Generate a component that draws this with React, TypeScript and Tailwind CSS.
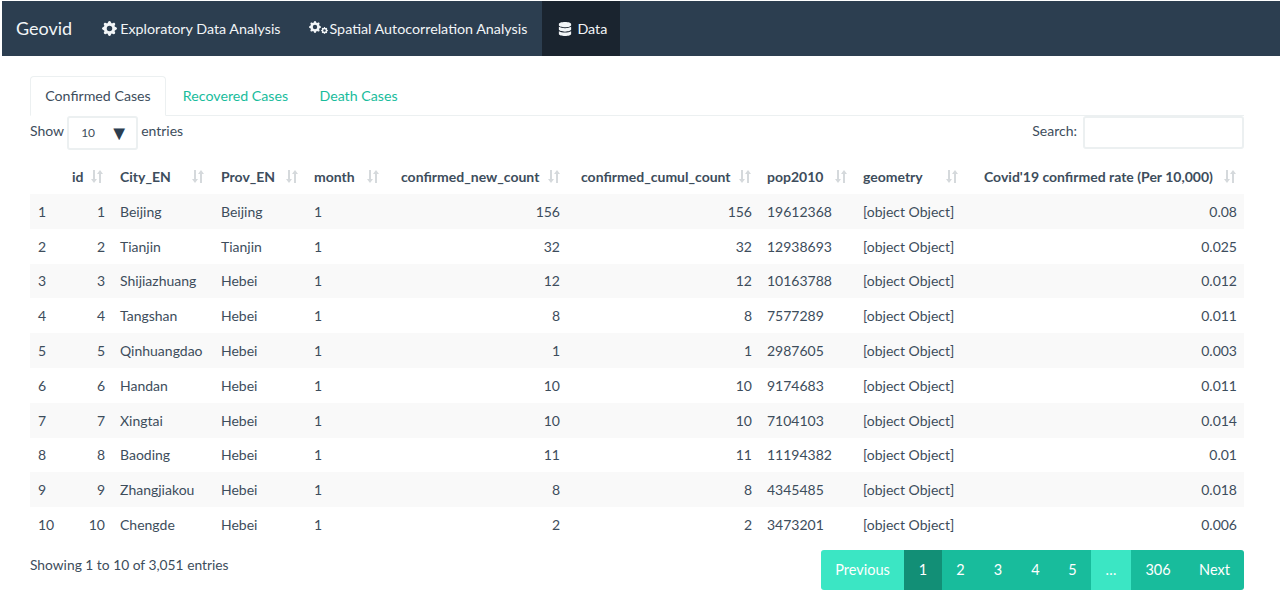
import { BsGearFill } from "react-icons/bs"
import { FaDatabase } from "react-icons/fa"

const rows = [
  [1, 1, "Beijing", "Beijing", 1, 156, 156, 19612368, "0.08"],
  [2, 2, "Tianjin", "Tianjin", 1, 32, 32, 12938693, "0.025"],
  [3, 3, "Shijiazhuang", "Hebei", 1, 12, 12, 10163788, "0.012"],
  [4, 4, "Tangshan", "Hebei", 1, 8, 8, 7577289, "0.011"],
  [5, 5, "Qinhuangdao", "Hebei", 1, 1, 1, 2987605, "0.003"],
  [6, 6, "Handan", "Hebei", 1, 10, 10, 9174683, "0.011"],
  [7, 7, "Xingtai", "Hebei", 1, 10, 10, 7104103, "0.014"],
  [8, 8, "Baoding", "Hebei", 1, 11, 11, 11194382, "0.01"],
  [9, 9, "Zhangjiakou", "Hebei", 1, 8, 8, 4345485, "0.018"],
  [10, 10, "Chengde", "Hebei", 1, 2, 2, 3473201, "0.006"],
]

const columns = [
  { label: "id", width: "w-[48px]", pad: "pr-[6px]" },
  { label: "City_EN", width: "w-[101px]", pad: "pr-[6px]" },
  { label: "Prov_EN", width: "w-[93px]", pad: "pr-[5px]" },
  { label: "month", width: "w-[87px]", pad: "pr-[11px]" },
  { label: "confirmed_new_count", width: "w-[180px]", pad: "pr-[10px]" },
  { label: "confirmed_cumul_count", width: "w-[186px]", pad: "pr-[5px]" },
  { label: "pop2010", width: "w-[96px]", pad: "pr-[5px]" },
  { label: "geometry", width: "w-[121px]", pad: "pr-[15px]" },
  { label: "Covid'19 confirmed rate (Per 10,000)", width: "w-[270px]", pad: "pr-[7px]" },
]

function SortIcon() {
  return (
    <svg width="14" height="15" viewBox="0 0 14 15" className="shrink-0 text-[#d5d9dc]" fill="currentColor">
      <path d="M3 1h2v9h2l-3 4-3-4h2z" />
      <path d="M10 14V5H8l3-4 3 4h-2v9z" transform="translate(-1 0)" />
    </svg>
  )
}

function PageLink({ label, className }: { label: string; className: string }) {
  return <div className={`flex h-full items-center justify-center text-white ${className}`}>{label}</div>
}

export default function App() {
  return (
    <div className="h-[612px] w-[1280px] overflow-hidden bg-white font-['Lato','Liberation_Sans',sans-serif] text-[14px] text-[#3d4d5c]">
      {/* Navbar */}
      <nav className="ml-[2px] mt-px flex h-[55px] items-stretch bg-[#2c3e50] text-[14.3px] text-[#f2f5f7]">
        <div className="flex items-center pl-[14px] pr-[30px] text-[18px]">Geovid</div>
        <div className="flex items-center gap-[3px] pr-[28px]">
          <BsGearFill className="text-[15px]" />
          Exploratory Data Analysis
        </div>
        <div className="flex items-center pr-[15px]">
          <BsGearFill className="mb-[3px] text-[12px]" />
          <BsGearFill className="mb-[-3px] mr-[2px] text-[7px]" />
          Spatial Autocorrelation Analysis
        </div>
        <div className="flex w-[78px] items-center gap-[5px] bg-[#1a242f] pl-[16px]">
          <FaDatabase className="text-[14px]" />
          Data
        </div>
      </nav>

      <div className="pl-[30px] pr-[36px] pt-[20px]">
        {/* Tabs */}
        <div className="flex h-[40px] gap-[2px] border-b border-[#ecf0f1] text-[14.2px]">
          <div className="flex h-[40px] w-[136px] items-center justify-center rounded-t border border-[#ecf0f1] border-b-white bg-white">
            Confirmed Cases
          </div>
          <div className="flex w-[135px] items-center justify-center text-[#18bc9c]">Recovered Cases</div>
          <div className="flex w-[107px] items-center justify-center text-[#18bc9c]">Death Cases</div>
        </div>

        {/* Length and search */}
        <div className="flex h-[33px] items-start justify-between">
          <div className="flex items-center gap-[3px]">
            <span className="mt-[-5px]">Show</span>
            <div className="flex h-[34px] w-[71px] items-center justify-between rounded-[3px] border-2 border-[#ecf0f1] pl-[12px] pr-[7px] text-[12px]">
              10
              <span className="mt-[-2px] text-[20px] leading-none text-[#2c3e50]">▼</span>
            </div>
            <span className="mt-[-5px]">entries</span>
          </div>
          <div className="flex items-center gap-[6px]">
            <span className="mt-[-5px]">Search:</span>
            <div className="h-[33px] w-[161px] rounded-[3px] border-2 border-[#ecf0f1]" />
          </div>
        </div>

        {/* Table */}
        <table className="mt-[10px] w-[1214px] table-fixed border-collapse">
          <colgroup>
            <col className="w-[32px]" />
            {columns.map((col) => (
              <col key={col.label} className={col.width} />
            ))}
          </colgroup>
          <thead>
            <tr className="h-[35px]">
              <th />
              {columns.map((col) => (
                <th key={col.label} className={`pl-[10px] text-left font-bold ${col.pad}`}>
                  <div className="flex items-center justify-between whitespace-nowrap">
                    {col.label}
                    <SortIcon />
                  </div>
                </th>
              ))}
            </tr>
          </thead>
          <tbody>
            {rows.map((row, i) => (
              <tr key={i} className={`h-[34.8px] ${i % 2 === 0 ? "bg-[#f9f9f9]" : ""}`}>
                <td className="pl-[8px]">{row[0]}</td>
                <td className="pr-[5px] text-right">{row[1]}</td>
                <td className="pl-[10px]">{row[2]}</td>
                <td className="pl-[10px]">{row[3]}</td>
                <td className="pl-[10px]">{row[4]}</td>
                <td className="pr-[11px] text-right">{row[5]}</td>
                <td className="pr-[5px] text-right">{row[6]}</td>
                <td className="pl-[10px]">{row[7]}</td>
                <td className="pl-[10px]">[object Object]</td>
                <td className="pr-[7px] text-right">{row[8]}</td>
              </tr>
            ))}
          </tbody>
        </table>

        {/* Footer */}
        <div className="mt-[8px] flex items-start justify-between">
          <div className="pt-[5px] text-[13.8px]">Showing 1 to 10 of 3,051 entries</div>
          <div className="flex h-[40px] w-[423px] overflow-hidden rounded-[3px] text-[14.5px]">
            <PageLink label="Previous" className="w-[83px] bg-[#3be6c4]" />
            <PageLink label="1" className="w-[38px] bg-[#128f76]" />
            <PageLink label="2" className="w-[37px] bg-[#18bc9c]" />
            <PageLink label="3" className="w-[38px] bg-[#18bc9c]" />
            <PageLink label="4" className="w-[37px] bg-[#18bc9c]" />
            <PageLink label="5" className="w-[37px] bg-[#18bc9c]" />
            <PageLink label="…" className="w-[40px] bg-[#3be6c4]" />
            <PageLink label="306" className="w-[54px] bg-[#18bc9c]" />
            <PageLink label="Next" className="w-[59px] bg-[#18bc9c]" />
          </div>
        </div>
      </div>
    </div>
  )
}
